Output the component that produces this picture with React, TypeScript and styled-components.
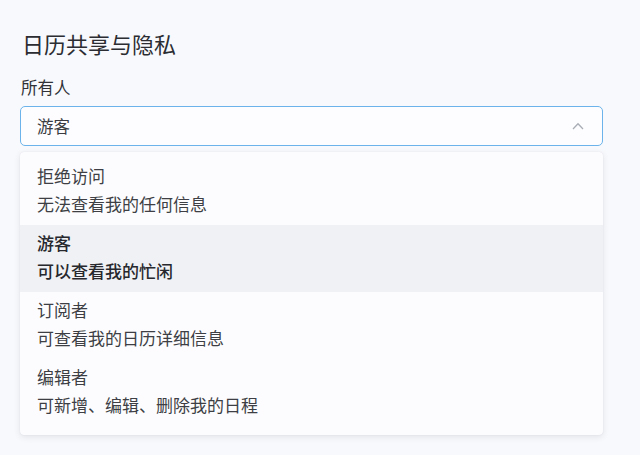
import React from "react";
import styled, { createGlobalStyle } from "styled-components";

const Global = createGlobalStyle`
  html, body { margin: 0; padding: 0; background: #f8f9fc; }
  body { font-family: "Noto Sans CJK SC", "Noto Sans", sans-serif; }
`;

const Page = styled.div`
  width: 640px;
  height: 455px;
  box-sizing: border-box;
  padding: 27px 37px 0 20px;
  background: #f8f9fc;
  overflow: hidden;
`;

const Title = styled.h1`
  margin: 0 0 0 2px;
  font-size: 22px;
  line-height: 32px;
  font-weight: 400;
  color: #2b2d33;
`;

const Label = styled.div`
  margin: 16px 0 0 1px;
  font-size: 16.5px;
  line-height: 24px;
  color: #2f3136;
`;

const SelectBox = styled.div`
  margin-top: 7px;
  height: 40px;
  box-sizing: border-box;
  border: 1.5px solid #6bb3ea;
  border-radius: 5px;
  background: #fdfdff;
  display: flex;
  align-items: center;
  justify-content: space-between;
  padding: 0 18px 0 16px;
  font-size: 16.5px;
  color: #3a3c42;
`;

const Menu = styled.div`
  margin-top: 6px;
  width: 583px;
  background: #fcfcfe;
  border-radius: 4px;
  box-shadow: 0 2px 6px rgba(30, 40, 70, 0.1), 0 0 1px rgba(30, 40, 70, 0.12);
  padding: 6px 0 9px;
`;

const Item = styled.div<{ $active?: boolean }>`
  padding: 4px 17px 7px;
  background: ${(p) => (p.$active ? "#f0f1f4" : "transparent")};
  color: ${(p) => (p.$active ? "#26282d" : "#3d3f45")};
  font-weight: ${(p) => (p.$active ? 500 : 400)};
  font-size: 17px;
  line-height: 28px;
`;

const Line = styled.div``;

const items = [
  { t: "拒绝访问", d: "无法查看我的任何信息" },
  { t: "游客", d: "可以查看我的忙闲", active: true },
  { t: "订阅者", d: "可查看我的日历详细信息" },
  { t: "编辑者", d: "可新增、编辑、删除我的日程" },
];

export default function App() {
  return (
    <>
      <Global />
      <Page>
        <Title>日历共享与隐私</Title>
        <Label>所有人</Label>
        <SelectBox>
          <span>游客</span>
          <svg width="12" height="8" viewBox="0 0 12 8" fill="none">
            <path d="M1 7 L6 1.8 L11 7" stroke="#a9adb5" strokeWidth="1.3" />
          </svg>
        </SelectBox>
        <Menu>
          {items.map((it) => (
            <Item key={it.t} $active={it.active}>
              <Line>{it.t}</Line>
              <Line>{it.d}</Line>
            </Item>
          ))}
        </Menu>
      </Page>
    </>
  );
}
